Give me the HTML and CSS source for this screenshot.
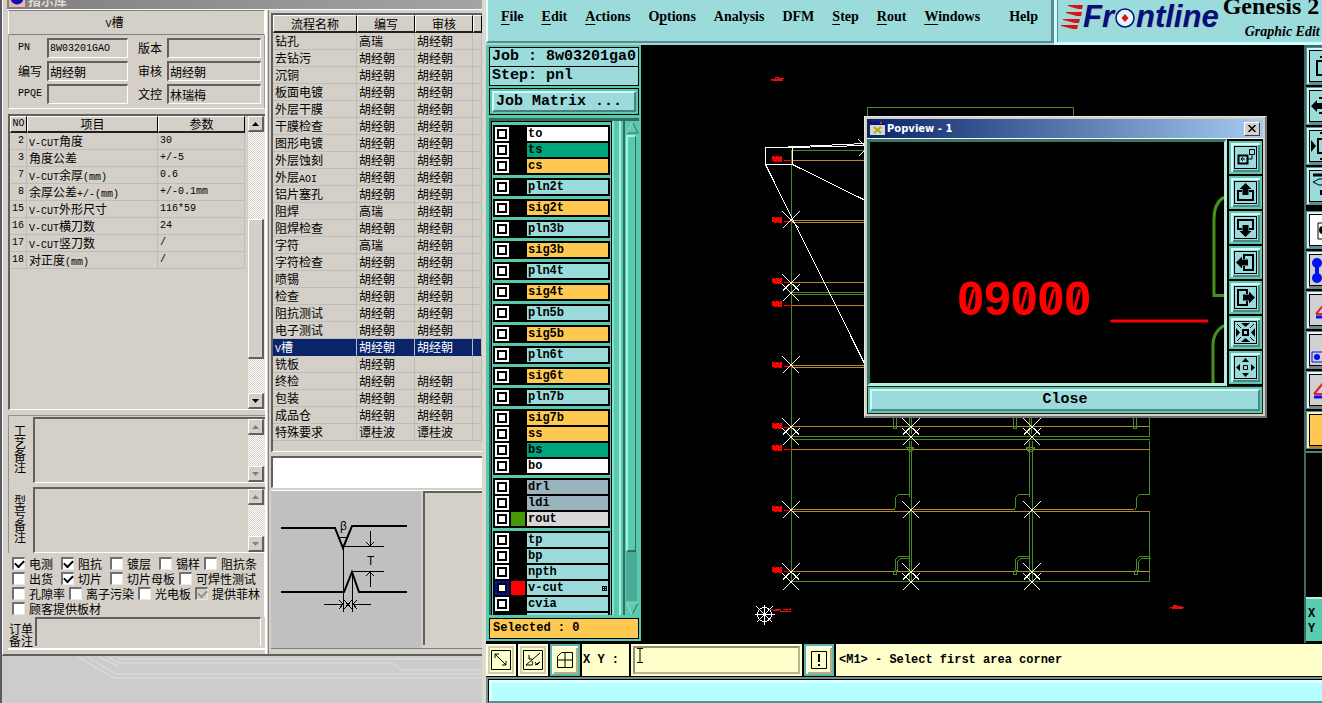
FILE: index.html
```html
<!DOCTYPE html>
<html lang="zh-CN">
<head>
<meta charset="utf-8">
<title>Genesis 2000 - Graphic Editor</title>
<link rel="stylesheet" href="styles.css">
</head>
<body>
<div class="desktop">

<section class="erp">
  <div class="erp-window">
    <header class="erp-title">
      <svg class="erp-icon" width="16" height="16" viewBox="0 0 16 16"><rect width="16" height="16" fill="#e8b8b0"/><circle cx="8" cy="7" r="6.5" fill="#1010b0"/><path d="M5 3h6l-3 6z" fill="#707820"/></svg>
      <span>指示库</span>
    </header>
    <div class="erp-body">
      <div class="col-a">
        <h1 class="process-name"><span class="lat">V</span>槽</h1>
        <div class="fields">
          <label for="pn" class="lat">PN</label><input id="pn" class="sunk lat" value="8W03201GAO">
          <label for="ver">版本</label><input id="ver" class="sunk">
          <label for="writer">编写</label><input id="writer" class="sunk" value="胡经朝">
          <label for="audit">审核</label><input id="audit" class="sunk" value="胡经朝">
          <label for="ppqe" class="lat">PPQE</label><input id="ppqe" class="sunk">
          <label for="doc">文控</label><input id="doc" class="sunk" value="林瑞梅">
        </div>
        <div class="params">
          <table class="grid">
            <thead><tr><th class="c-no lat">NO</th><th class="c-item">项目</th><th class="c-val">参数</th></tr></thead>
            <tbody>
              <tr><td class="num lat">2</td><td><span class="lat">V-CUT</span>角度</td><td class="lat">30</td></tr>
              <tr><td class="num lat">3</td><td>角度公差</td><td class="lat">+/-5</td></tr>
              <tr><td class="num lat">7</td><td><span class="lat">V-CUT</span>余厚<span class="lat">(mm)</span></td><td class="lat">0.6</td></tr>
              <tr><td class="num lat">8</td><td>余厚公差<span class="lat">+/-(mm)</span></td><td class="lat">+/-0.1mm</td></tr>
              <tr><td class="num lat">15</td><td><span class="lat">V-CUT</span>外形尺寸</td><td class="lat">116*59</td></tr>
              <tr><td class="num lat">16</td><td><span class="lat">V-CUT</span>横刀数</td><td class="lat">24</td></tr>
              <tr><td class="num lat">17</td><td><span class="lat">V-CUT</span>竖刀数</td><td class="lat">/</td></tr>
              <tr><td class="num lat">18</td><td>对正度<span class="lat">(mm)</span></td><td class="lat">/</td></tr>
            </tbody>
          </table>
          <div class="scroll">
            <button class="sbtn" aria-label="up"><svg width="7" height="4" viewBox="0 0 7 4"><path d="M0 4h7L3.500 0z"/></svg></button>
            <div class="track"><div class="thumb"></div></div>
            <button class="sbtn" aria-label="down"><svg width="7" height="4" viewBox="0 0 7 4"><path d="M0 0h7L3.500 4z"/></svg></button>
          </div>
        </div>
        <div class="memos">
          <div class="memo"><label for="m1">工艺备注</label>
            <div class="memo-box"><textarea id="m1"></textarea><div class="scroll off">
              <button class="sbtn" aria-label="up"><svg width="7" height="4" viewBox="0 0 7 4"><path d="M0 4h7L3.500 0z"/></svg></button><div class="track"></div>
              <button class="sbtn" aria-label="down"><svg width="7" height="4" viewBox="0 0 7 4"><path d="M0 0h7L3.500 4z"/></svg></button></div></div></div>
          <div class="memo"><label for="m2">型号备注</label>
            <div class="memo-box"><textarea id="m2"></textarea><div class="scroll off">
              <button class="sbtn" aria-label="up"><svg width="7" height="4" viewBox="0 0 7 4"><path d="M0 4h7L3.500 0z"/></svg></button><div class="track"></div>
              <button class="sbtn" aria-label="down"><svg width="7" height="4" viewBox="0 0 7 4"><path d="M0 0h7L3.500 4z"/></svg></button></div></div></div>
        </div>
        <div class="checks">
          <div class="check-row"><label><input type="checkbox" checked>电测</label><label><input type="checkbox" checked>阻抗</label><label><input type="checkbox">镀层</label><label><input type="checkbox">锡样</label><label class="tight"><input type="checkbox">阻抗条</label></div>
          <div class="check-row"><label><input type="checkbox">出货</label><label><input type="checkbox" checked>切片</label><label><input type="checkbox">切片母板</label><label class="tight"><input type="checkbox">可焊性测试</label></div>
          <div class="check-row close"><label><input type="checkbox">孔隙率</label><label><input type="checkbox">离子污染</label><label><input type="checkbox">光电板</label><label><input type="checkbox" checked disabled>提供菲林</label></div>
          <div class="check-row"><label><input type="checkbox">顾客提供板材</label></div>
        </div>
        <div class="order"><label for="ord">订单备注</label><textarea id="ord"></textarea></div>
      </div>

      <div class="col-b">
        <div class="process">
          <table class="grid">
            <thead><tr><th class="c-proc">流程名称</th><th class="c-who">编写</th><th class="c-who">审核</th><th></th></tr></thead>
            <tbody>
              <tr><td>钻孔</td><td>高瑞</td><td>胡经朝</td><td></td></tr>
              <tr><td>去钻污</td><td>胡经朝</td><td>胡经朝</td><td></td></tr>
              <tr><td>沉铜</td><td>胡经朝</td><td>胡经朝</td><td></td></tr>
              <tr><td>板面电镀</td><td>胡经朝</td><td>胡经朝</td><td></td></tr>
              <tr><td>外层干膜</td><td>胡经朝</td><td>胡经朝</td><td></td></tr>
              <tr><td>干膜检查</td><td>胡经朝</td><td>胡经朝</td><td></td></tr>
              <tr><td>图形电镀</td><td>胡经朝</td><td>胡经朝</td><td></td></tr>
              <tr><td>外层蚀刻</td><td>胡经朝</td><td>胡经朝</td><td></td></tr>
              <tr><td>外层<span class="lat">AOI</span></td><td>胡经朝</td><td>胡经朝</td><td></td></tr>
              <tr><td>铝片塞孔</td><td>胡经朝</td><td>胡经朝</td><td></td></tr>
              <tr><td>阻焊</td><td>高瑞</td><td>胡经朝</td><td></td></tr>
              <tr><td>阻焊检查</td><td>胡经朝</td><td>胡经朝</td><td></td></tr>
              <tr><td>字符</td><td>高瑞</td><td>胡经朝</td><td></td></tr>
              <tr><td>字符检查</td><td>胡经朝</td><td>胡经朝</td><td></td></tr>
              <tr><td>喷锡</td><td>胡经朝</td><td>胡经朝</td><td></td></tr>
              <tr><td>检查</td><td>胡经朝</td><td>胡经朝</td><td></td></tr>
              <tr><td>阻抗测试</td><td>胡经朝</td><td>胡经朝</td><td></td></tr>
              <tr><td>电子测试</td><td>胡经朝</td><td>胡经朝</td><td></td></tr>
              <tr class="sel"><td><span class="lat">V</span>槽</td><td>胡经朝</td><td>胡经朝</td><td></td></tr>
              <tr><td>铣板</td><td>胡经朝</td><td></td><td></td></tr>
              <tr><td>终检</td><td>胡经朝</td><td>胡经朝</td><td></td></tr>
              <tr><td>包装</td><td>胡经朝</td><td>胡经朝</td><td></td></tr>
              <tr><td>成品仓</td><td>胡经朝</td><td>胡经朝</td><td></td></tr>
              <tr><td>特殊要求</td><td>谭桂波</td><td>谭桂波</td><td></td></tr>
            </tbody>
          </table>
        </div>
        <textarea class="remark" aria-label="remark"></textarea>
        <div class="figure-row">
          <svg class="figure" viewBox="271 491 150 153" preserveAspectRatio="xMinYMin meet">
            <g fill="none" stroke="#000" stroke-width="2"><path d="M281 528h54l8 20 9-22h55M281 592h63l8-20 7 20h48"/></g>
            <g fill="none" stroke="#000" stroke-width="1" shape-rendering="crispEdges">
              <path d="M343.500 547v65M352.500 572v40M344 546.500h40M352 571.500h32M340 537.500h7M370.500 531v15M370.500 587v-15M324 604.500h19M353 604.500h18"/>
              <path d="M366 542l4 4 4-4M366 576l4-4 4 4M339 600l4 4-4 5M357 600l-4 4 4 5M344 600l8 9M352 600l-8 9"/>
            </g>
            <text x="340" y="530" class="fig-text">β</text><text x="367" y="565" class="fig-text">T</text>
          </svg>
          <div class="figure-side"></div>
        </div>
      </div>
    </div>
  </div>
  <svg class="backdrop" viewBox="0 0 483 47" preserveAspectRatio="xMinYMin slice"><g fill="none" stroke="#e2e2e2"><path d="M76 1l36 21M86 1l28 17M96 1l20 9M106 1l10 6M112 22h370M114 18h370M116 7h274l10 7h84M116 3h367"/></g></svg>
</section>

<section class="app">
  <header class="top">
    <nav class="menubar">
      <button><u>F</u>ile</button><button><u>E</u>dit</button><button><u>A</u>ctions</button><button>O<u>p</u>tions</button><button>Analysis</button><button>DFM</button><button><u>S</u>tep</button><button><u>R</u>out</button><button><u>W</u>indows</button><button class="help">Help</button>
    </nav>
    <div class="brand">
      <div class="logo">
        <svg width="22" height="24" viewBox="0 0 22 24"><g fill="#e01010"><path d="M7 0h15l-1 4h-4L7 1zM5 7h16l-1 4h-4L5 8zM2 14h17l-1 4h-4L2 15zM0 20h17l-1 4h-4L0 21z"/></g></svg><span>Fr</span><svg width="22" height="22" viewBox="0 0 22 22"><circle cx="11" cy="12" r="9" fill="#e0f6fa" stroke="#00107c" stroke-width="1.500"/><path d="M11 8l3.500 4-3.500 4-3.500-4z" fill="#e01010"/></svg><span>ntline</span>
      </div>
      <div class="product"><strong>Genesis 2</strong><em>Graphic Edit</em></div>
    </div>
  </header>

  <div class="middle">
    <aside class="side">
      <div class="info">Job : 8w03201ga0</div>
      <div class="info">Step: pnl</div>
      <div class="matrix"><button>Job Matrix ...</button></div>
      <div class="layers">
        <div class="layer-list">
          <div class="group">
            <label class="layer white"><input type="checkbox"><i></i><span>to</span></label>
            <label class="layer green"><input type="checkbox"><i></i><span>ts</span></label>
            <label class="layer amber"><input type="checkbox"><i></i><span>cs</span></label>
          </div>
          <div class="group"><label class="layer"><input type="checkbox"><i></i><span>pln2t</span></label></div>
          <div class="group"><label class="layer amber"><input type="checkbox"><i></i><span>sig2t</span></label></div>
          <div class="group"><label class="layer"><input type="checkbox"><i></i><span>pln3b</span></label></div>
          <div class="group"><label class="layer amber"><input type="checkbox"><i></i><span>sig3b</span></label></div>
          <div class="group"><label class="layer"><input type="checkbox"><i></i><span>pln4t</span></label></div>
          <div class="group"><label class="layer amber"><input type="checkbox"><i></i><span>sig4t</span></label></div>
          <div class="group"><label class="layer"><input type="checkbox"><i></i><span>pln5b</span></label></div>
          <div class="group"><label class="layer amber"><input type="checkbox"><i></i><span>sig5b</span></label></div>
          <div class="group"><label class="layer"><input type="checkbox"><i></i><span>pln6t</span></label></div>
          <div class="group"><label class="layer amber"><input type="checkbox"><i></i><span>sig6t</span></label></div>
          <div class="group"><label class="layer"><input type="checkbox"><i></i><span>pln7b</span></label></div>
          <div class="group">
            <label class="layer amber"><input type="checkbox"><i></i><span>sig7b</span></label>
            <label class="layer amber"><input type="checkbox"><i></i><span>ss</span></label>
            <label class="layer green"><input type="checkbox"><i></i><span>bs</span></label>
            <label class="layer white"><input type="checkbox"><i></i><span>bo</span></label>
          </div>
          <div class="group">
            <label class="layer slate"><input type="checkbox"><i></i><span>drl</span></label>
            <label class="layer slate"><input type="checkbox"><i></i><span>ldi</span></label>
            <label class="layer grey"><input type="checkbox"><i class="lime"></i><span>rout</span></label>
          </div>
          <div class="group">
            <label class="layer"><input type="checkbox"><i></i><span>tp</span></label>
            <label class="layer"><input type="checkbox"><i></i><span>bp</span></label>
            <label class="layer"><input type="checkbox"><i></i><span>npth</span></label>
            <label class="layer"><input type="checkbox" checked><i class="red"></i><span>v-cut<svg width="5" height="5" viewBox="0 0 5 5" shape-rendering="crispEdges"><path d="M.5.5h4v4h-4zM2.500 0v5M0 2.500h5" fill="none" stroke="#000"/></svg></span></label>
            <label class="layer"><input type="checkbox"><i></i><span>cvia</span></label>
            <div class="layer-cut"></div>
          </div>
        </div>
        <div class="vscroll">
          <svg width="13" height="14" viewBox="0 0 13 14"><path d="M1 12L6.500 1 12 12z" fill="#5ccbb0" stroke="#2f6f62"/><path d="M1 12L6.500 1" stroke="#b8f0e0"/></svg>
          <div class="vthumb"></div><div class="vtrack"></div>
          <svg width="13" height="14" viewBox="0 0 13 14"><path d="M1 2L6.500 13 12 2z" fill="#5ccbb0" stroke="#2f6f62"/><path d="M12 2H1l5 11" stroke="#b8f0e0" fill="none"/></svg>
        </div>
      </div>
      <div class="selected">Selected : 0</div>
    </aside>

    <main class="stage">
      <svg class="board" viewBox="641 45 664 598" preserveAspectRatio="xMinYMin slice">
        <defs>
          <g id="x"><path d="M-9-9l17 17M8-9l-17 17"/></g>
          <g id="xs"><path d="M-9 1l6 6M-3 1l-6 6M2 1l6 6M8 1l-6 6"/></g>
          <g id="xx"><use href="#x"/><use href="#xs"/><use href="#x" y="10"/></g>
          <g id="tag"><path d="M0-3h2l1 1 2-1 2 1 2-1v5H7L5 1 3 2H2V1H0zM11 1h8" /></g>
          <g id="notch"><path d="M14 0H4l-3 3v10l-2 3"/></g>
          <g id="notch2"><path d="M14 0H4l-3 3v10l-2 3v2h3v-3l1-2V5l3-3h9"/></g>
        </defs>
        <g fill="none" stroke-width="1" shape-rendering="crispEdges" transform="translate(.5 .5)">
          <g stroke="#b08c30"><path d="M791 160h74M791 220h74M791 222h74M791 282h74M791 305h74M791 365h74M791 367h74M791 426h358M791 449h358M791 509h102M912 509h101M1033 509h100M791 511h358M791 571h358"/></g>
          <g stroke="#4a8828">
            <path d="M867 116v-9h206v9M791 581V150h74M791 292h74M791 294h74M791 436h358M791 439h358M791 581h358"/>
            <path d="M909 417v16M911 417v16M909 440v56l-1 1M909 511v70M911 440v141M1029 417v16M1031 417v16M1029 440v56M1029 511v70M1032 440v141M1149 417v19M1149 440v54M1149 511v70"/>
            <path d="M893 417v11h3v-11M1013 417v11h3v-11M1133 417v11h3v-11M906 447h7l-2 4h-2zM1026 447h8l-2 4h-4z"/>
            <use href="#notch" x="894" y="494"/><use href="#notch" x="1014" y="494"/><use href="#notch" x="1135" y="494"/>
            <use href="#notch2" x="894" y="556"/><use href="#notch2" x="1014" y="556"/><use href="#notch2" x="1135" y="556"/>
          </g>
          <g stroke="#f00" fill="#f00">
            <use href="#tag" x="772" y="159"/><use href="#tag" x="772" y="220"/><use href="#tag" x="772" y="281"/><use href="#tag" x="772" y="304"/><use href="#tag" x="772" y="365"/><use href="#tag" x="772" y="426"/><use href="#tag" x="772" y="448"/><use href="#tag" x="772" y="509"/><use href="#tag" x="772" y="570"/>
          </g>
          <g stroke="#e01010"><path d="M769 81l2-2h4v-2h3v3h4v-3M771 80h7M773 79h9M776 78h7M1168 609l2-2h3v-2h3v3h6M1172 607h11M1171 608h8M1172 606h9M770 608l3 2h5M774 609h5M780 608v3h9M782 609h6M786 608v3h4M787 609h3v-2"/></g>
          <g stroke="#fff">
            <path d="M765 147h27v17h-27zM776 147l89-4M792 147l73-2M792 164l73 36M765 164l100 201"/>
            <use href="#x" x="867" y="148"/><use href="#x" x="791" y="220"/><use href="#xx" x="791" y="283"/><use href="#x" x="791" y="365"/>
            <use href="#xx" x="791" y="427"/><use href="#xx" x="911" y="427"/><use href="#xx" x="1032" y="427"/>
            <use href="#x" x="791" y="510"/><use href="#x" x="911" y="510"/><use href="#x" x="1032" y="510"/>
            <use href="#xx" x="791" y="572"/><use href="#xx" x="911" y="572"/><use href="#xx" x="1032" y="572"/>
            <circle cx="764" cy="614" r="7"/><path d="M754 614h20M764 604v20M756 606l16 16M772 606l-16 16"/>
          </g>
        </g>
      </svg>

      <section class="popup">
        <header class="popup-title">
          <svg width="15" height="13" viewBox="0 0 15 13"><rect width="15" height="13" fill="#d8d8d0"/><rect width="15" height="3" fill="#101080"/><rect x="10" width="2" height="2" fill="#a04040"/><path d="M4 5l7 6M11 5l-7 6" stroke="#b0a810" stroke-width="2"/></svg>
          <span>Popview - 1</span>
          <button aria-label="close window"><svg width="8" height="7" viewBox="0 0 8 7"><path d="M.5 0l7 7M7.500 0l-7 7" stroke="#000" stroke-width="1.500"/></svg></button>
        </header>
        <div class="popup-body">
          <svg class="popup-view" viewBox="871 141 353 241" preserveAspectRatio="xMinYMin slice">
            <text x="958" y="314" class="cad-text">09000</text>
            <g stroke="#f00" stroke-width="3" fill="none" stroke-linecap="round"><path d="M1112 319.500h95M969 307l5-18M1022 307l5-18M1049 307l5-18M1075 307l5-18"/></g>
            <path d="M1224 196c-7 4-10 12-10 22v76h10M1224 324c-7 4-11 10-11 20v40" fill="none" stroke="#48901c" stroke-width="3"/>
          </svg>
          <div class="popup-tools">
            <button aria-label="pick"><svg viewBox="0 0 21 21"><path d="M3.500 8.500h9v8h-9z" stroke-width="2"/><path d="M14.500 2.500h5v5h-5zM13 12h4V8M10 12H6M8 10l-2 2 2 2"/></svg></button>
            <button aria-label="pan up"><svg viewBox="0 0 21 21"><path d="M7 9H3v9h15V9h-4" stroke-width="2"/><path class="f" d="M10.500 1l6 6h-3v6h-6V7h-3z"/></svg></button>
            <button aria-label="pan down"><svg viewBox="0 0 21 21"><path d="M7 12H3V3h15v9h-4" stroke-width="2"/><path class="f" d="M10.500 20l6-6h-3V8h-6v6h-3z"/></svg></button>
            <button aria-label="pan left"><svg viewBox="0 0 21 21"><path d="M9 7V3h9v15H9v-4" stroke-width="2"/><path class="f" d="M1 10.500l6-6v3h6v6H7v3z"/></svg></button>
            <button aria-label="pan right"><svg viewBox="0 0 21 21"><path d="M12 7V3H3v15h9v-4" stroke-width="2"/><path class="f" d="M20 10.500l-6-6v3H8v6h6v3z"/></svg></button>
            <button aria-label="zoom in"><svg viewBox="0 0 21 21"><path d="M8 8h5v5H8z" stroke-width="2"/><path class="f" d="M6 1h9l-4.500 4zM6 20h9l-4.500-4zM1 6v9l4-4.500zM20 6v9l-4-4.500z"/><path d="M2 2l4 4M19 2l-4 4M2 19l4-4M19 19l-4-4"/></svg></button>
            <button aria-label="zoom out"><svg viewBox="0 0 21 21"><path d="M8.500 8.500h4v4h-4z"/><path class="f" d="M7 5h7l-3.500-4zM7 16h7l-3.500 4zM5 7v7l-4-3.500zM16 7v7l4-3.500z"/></svg></button>
          </div>
        </div>
        <div class="popup-foot"><button>Close</button></div>
      </section>
    </main>

    <aside class="tools">
      <button class="t"><svg viewBox="0 0 30 30"><path d="M7 10h16v14H7zM10 6h10" stroke-width="2"/></svg></button>
      <button class="t"><svg viewBox="0 0 30 30"><path d="M9 7h16v15H9" stroke-width="2"/><path class="f" d="M1 15l6-6v3h5v6H7v3z"/></svg></button>
      <button class="t"><svg viewBox="0 0 30 30"><path d="M8 8h14v14H8zM10 2h12M10 28h12" stroke-width="2"/><path class="f" d="M1 9l5 6-5 6z"/></svg></button>
      <button class="t gap"><svg viewBox="0 0 30 30"><path d="M3 4h20" stroke-width="3"/><path d="M3 11l6-3h14M3 11l6 3h14"/><path class="f" d="M10 19h8v5h-8z"/></svg></button>
      <button class="t w"><svg viewBox="0 0 30 30"><path d="M8 8h16v16H8z"/><circle class="f" cx="13" cy="15" r="4"/></svg></button>
      <button class="t g"><svg viewBox="0 0 30 30"><g fill="#0010f0" stroke="none"><circle cx="7" cy="8" r="5"/><circle cx="7" cy="23" r="5"/><path d="M5 8h4v15H5z"/></g></svg></button>
      <button class="t g"><svg viewBox="0 0 30 30"><path d="M6 19l10-12M6 19h8" stroke="#e02030" stroke-width="2"/><path d="M6 22h9" stroke="#0010f0" stroke-width="3"/></svg></button>
      <button class="t g"><svg viewBox="0 0 30 30"><path d="M2 17h22v10H2z" stroke="#0010f0"/><circle cx="7" cy="22" r="3" fill="#0010f0" stroke="none"/></svg></button>
      <button class="t g"><svg viewBox="0 0 30 30"><path d="M4 19l10-12M4 19h8" stroke="#e02030" stroke-width="2"/><path d="M4 22h9" stroke="#0010f0" stroke-width="3"/></svg></button>
      <button class="t a"><svg viewBox="0 0 30 30"></svg></button>
      <div class="rest"></div>
      <div class="xy">X<br>Y</div>
    </aside>
  </div>

  <footer class="status">
    <button class="sb" aria-label="measure"><svg viewBox="0 0 20 20"><path d="M.5.5h19v19H.5zM4 4l11 11M4 8V4h4M15 11v4h-4"/></svg></button>
    <button class="sb" aria-label="angle"><svg viewBox="0 0 20 20"><path d="M.5.5h19v19H.5zM3 15L17 3M3 15h6c1 0 1-2 0-4M6 5v4h3M12 12l2 3 3-3M12 15l5-3"/></svg></button>
    <button class="sb on" aria-label="grid"><svg viewBox="0 0 20 20"><path d="M2.500 17.500v-11l4-4h11v15zM2.500 10h15M10 2.500v15"/></svg></button>
    <label class="xylabel" for="cmd">X Y :</label>
    <div class="cmdwrap"><input id="cmd"><svg class="caret" width="6" height="15" viewBox="0 0 6 15"><path d="M0 .5h6M0 14.500h6M3 0v15" stroke="#000"/></svg></div>
    <button class="sb on" aria-label="alert"><svg viewBox="0 0 20 20"><path d="M2.500 1.500h15v17h-15z"/><path d="M10 4v8M10 14v2" stroke-width="2"/></svg></button>
    <p class="message">&lt;M1&gt; - Select first area corner</p>
  </footer>
  <div class="under"><div></div></div>
</section>
</div>
</body>
</html>
```

FILE: styles.css
```css
* { box-sizing: border-box; }
body { margin: 0; overflow: hidden; background: #000; }
button, input, textarea { font: inherit; color: inherit; border-radius: 0; margin: 0; }
button { cursor: default; }
textarea { resize: none; display: block; }
.desktop { display: grid; grid-template-columns: 486px minmax(0, 1fr); height: 100vh; overflow: hidden; }

/* left window */
.erp { display: flex; flex-direction: column; min-height: 0; background: #ccc; border-left: 2px solid #5a5a66; border-right: 4px solid #dcdad0; font: 12px/16px "Noto Sans CJK SC", sans-serif; color: #000; overflow: hidden; }
.erp-window { display: flex; flex-direction: column; flex: 1; min-height: 0; background: #d4d0c8; border-left: 1px solid #fff; border-bottom: 2px solid #606060; padding-left: 4px; }
.lat { font-family: "Liberation Mono", monospace; font-size: 10px; }
span.lat { line-height: 1; }
.erp-title { display: flex; align-items: flex-end; gap: 3px; height: 9px; padding-bottom: 2px; background: linear-gradient(90deg, #808080, #a4a4a4); color: #dcd8d0; font: bold 13px/14px "Noto Sans CJK SC", sans-serif; overflow: hidden; }
.erp-title span { flex: none; }
.erp-icon { flex: none; margin-left: 2px; }
.erp-body { display: flex; flex: 1; min-height: 0; border-top: 1px solid #fff; }
.col-a { display: flex; flex-direction: column; width: 260px; padding-left: 1px; border-right: 2px solid #fff; }
.process-name { height: 25px; margin: 0; padding-right: 44px; border: 1px solid #808080; border-left-color: #fff; border-right-color: #fff; font-size: 12px; font-weight: 400; line-height: 22px; text-align: center; }
.fields { display: grid; grid-template-columns: 26px 81px 33px 1fr; column-gap: 3px; row-gap: 3px; padding: 3px 3px 4px 9px; border: 1px solid #a0a0a0; border-bottom-color: #fff; border-top: 0; align-items: center; }
.fields label:nth-of-type(even) { padding-left: 7px; white-space: nowrap; width: 40px; }
.sunk { width: 100%; min-width: 0; height: 20px; padding: 0 1px; background: transparent; border: 2px solid #fff; border-top-color: #606060; border-left-color: #606060; border-right-width: 1px; border-bottom-width: 1px; outline: 0; }
.params { display: flex; justify-content: space-between; height: 296px; margin: 5px 0 5px; border: 2px solid #fff; border-top-color: #606060; border-left-color: #606060; border-right: 0; border-bottom-width: 1px; }
.grid { border-collapse: separate; border-spacing: 0; table-layout: fixed; align-self: flex-start; }
.grid th { height: 17px; padding: 0; font-weight: 400; text-align: center; line-height: 14px; border: 1px solid #fff; border-right-color: #000; border-bottom: 2px solid #202020; }
.grid td { height: 17px; padding: 0 2px; line-height: 16px; vertical-align: middle; border-right: 1px solid #bcbcbc; border-bottom: 1px solid #bcbcbc; white-space: nowrap; overflow: hidden; }
.params .grid { width: 235px; }
.c-no { width: 17px; }
.c-item { width: 131px; }
.grid .num { text-align: right; padding: 0 2px 0 0; }
.scroll { display: flex; flex-direction: column; width: 17px; }
.sbtn { display: grid; place-items: center; width: 16px; height: 16px; padding: 0; background: #d4d0c8; border: 1px solid #fff; border-right: 2px solid #606060; border-bottom: 2px solid #606060; flex: none; }
.track { display: flex; flex-direction: column; justify-content: flex-end; flex: 1; background: repeating-conic-gradient(#fff 0 25%, #d4d0c8 0 50%) 0 0 / 2px 2px; padding-bottom: 34px; }
.thumb { height: 140px; width: 16px; background: #d4d0c8; border: 1px solid #fff; border-right: 2px solid #606060; border-bottom: 2px solid #606060; }
.off .sbtn svg { fill: #808080; }
.off .track { padding: 0; }
.memos { display: flex; flex-direction: column; gap: 4px; border-top: 1px solid #909090; border-left: 1px solid #909090; padding: 1px 0 0; }
.memo { display: flex; height: 66px; }
.memo label { width: 24px; padding: 8px 7px 0 5px; line-height: 12px; overflow-wrap: anywhere; }
.memo-box { display: flex; flex: 1; border: 2px solid #fff; border-top-color: #606060; border-left-color: #606060; border-right: 0; border-bottom-width: 1px; }
.memo-box textarea { flex: 1; min-width: 0; height: auto; border: 0; background: transparent; outline: 0; }
.checks { display: flex; flex-direction: column; padding: 3px 0 1px 4px; border-right: 1px solid #fff; }
.check-row { display: flex; gap: 8px; height: 15px; white-space: nowrap; }
.check-row.close { gap: 4px; }
.check-row label { display: flex; align-items: center; gap: 4px; line-height: 15px; flex: none; }
.check-row .tight { margin-left: -4px; }
.checks input { appearance: none; width: 13px; height: 13px; background: #fff; border: 1px solid #e8e8e4; border-top: 2px solid #707070; border-left: 2px solid #707070; }
.checks input:checked::after { content: ""; display: block; width: 7px; height: 4px; margin: 1px; border-left: 2px solid #000; border-bottom: 2px solid #000; transform: rotate(-45deg); }
.checks input:disabled { background: #d4d0c8; }
.checks input:disabled::after { border-color: #909090; }
.order { display: flex; height: 33px; border-bottom: 2px solid #fff; }
.order label { width: 27px; padding: 6px 0 0 1px; line-height: 12px; }
.order textarea { flex: 1; min-width: 0; height: 29px; margin-right: 4px; background: transparent; border: 0; border-top: 2px solid #606060; border-left: 2px solid #606060; border-right: 1px solid #fff; outline: 0; }
.col-b { display: flex; flex-direction: column; flex: 1; min-width: 0; padding: 3px 0 5px 2px; border-left: 1px solid #808080; margin-left: 1px; overflow: hidden; }
.process { height: 439px; border: 2px solid #606060; border-right: 0; border-bottom: 1px solid #fff; }
.process .grid { width: 100%; }
.process .grid th { height: 18px; }
.c-proc { width: 84px; }
.c-who { width: 58px; }
.sel td { background: #0a246a; color: #fff; border-bottom-color: #0a246a; }
.remark { flex: none; height: 32px; width: 100%; margin: 4px 0 2px; background: #fff; border: 2px solid #606060; border-right: 0; border-bottom: 1px solid #fff; outline: 0; }
.figure-row { display: flex; flex: 1; min-height: 0; gap: 2px; border-top: 1px solid #fff; border-bottom: 1px solid #808080; }
.figure { flex: none; width: 150px; height: 100%; background: #c0c0c0; }
.fig-text { font: 12px "Liberation Sans", sans-serif; }
.figure-side { flex: 1; margin-bottom: 3px; border-left: 2px solid #606060; border-top: 2px solid #606060; }
.backdrop { flex: none; width: 100%; height: 47px; background: #ccc; }

/* right application */
.app { display: flex; flex-direction: column; min-width: 0; min-height: 0; font: bold 12px/16px "Liberation Mono", monospace; color: #000; }
.top { display: flex; flex: none; height: 45px; background: #9cdbdb; overflow: hidden; }
.menubar { display: flex; align-items: flex-start; gap: 18px; width: 568px; flex: none; padding: 8px 13px 0 13px; border-left: 2px solid #dff; border-right: 3px solid #5c8a90; border-bottom: 2px solid #5c8a90; margin-bottom: 2px; font: bold 14px/18px "Liberation Serif", serif; }
.menubar button { padding: 0; border: 0; background: none; line-height: 18px; }
.menubar u { text-underline-offset: 3px; }
.menubar .help { margin-left: auto; }
.brand { display: flex; flex: 1; min-width: 0; gap: 4px; padding-left: 4px; border-left: 3px solid #cff; border-bottom: 3px solid #cff; box-shadow: inset 1px 0 #5c8a90; overflow: hidden; }
.logo { display: flex; align-items: center; height: 34px; flex: none; color: #00107c; font: italic bold 31px/34px "Liberation Sans", sans-serif; text-shadow: 1px 1px #b8b8b0; }
.product { display: flex; flex-direction: column; flex: none; white-space: nowrap; font-family: "Liberation Serif", serif; overflow: hidden; }
.product strong { font-size: 24px; line-height: 28px; margin-top: -8px; }
.product em { font-size: 14px; line-height: 18px; padding: 3px 0 0 22px; }
.middle { display: flex; flex: 1; min-height: 0; }
.side { display: flex; flex-direction: column; width: 155px; flex: none; padding: 2px 2px 2px 3px; background: #5ac8ac; border-bottom: 2px solid #000; }
.info { height: 20px; margin-bottom: -1px; padding: 0 2px; border: 1px solid #000; background: #9cdbdb; font-size: 15px; line-height: 18px; white-space: nowrap; overflow: hidden; }
.matrix { margin: 3px 0 3px; padding: 2px; border: 1px solid #000; height: 27px; }
.matrix button { display: block; width: 100%; height: 21px; padding: 0 2px; background: #9cdbdb; border: 2px solid #cffafa; border-right-color: #4c8080; border-bottom-color: #4c8080; font-size: 15px; line-height: 17px; text-align: left; }
.layers { display: flex; flex: 1; min-height: 0; justify-content: space-between; padding-right: 1px; border-left: 2px solid #2f6f62; border-top: 3px solid #2f6f62; }
.layer-list { display: flex; flex-direction: column; gap: 3px; width: 121px; padding: 3px 0 0 1px; border-left: 1px solid #000; border-top: 1px solid #000; border-right: 1px solid #000; overflow: hidden; box-shadow: 2px 0 #8ee0cc, 7px 0 #5ac8ac, 9px 0 #a8f0e0; }
.group { flex: none; width: 117px; padding: 1px; background: #000; }
.layer { display: grid; grid-template-columns: 14px 14px 1fr; gap: 2px; height: 16px; padding: 1px; }
.layer input { appearance: none; width: 14px; height: 14px; background: #fff; border: 2px solid #fff; box-shadow: inset 0 0 0 2px #000; }
.layer input:checked { border-color: #0010a0; }
.layer span { display: flex; justify-content: space-between; align-items: center; height: 14px; padding: 0 1px; background: #9cdbdb; line-height: 14px; }
.layer.white span { background: #fff; }
.layer.green span { background: #00a47c; }
.layer.amber span { background: #ffc850; }
.layer.slate span { background: #9ab4be; }
.layer.grey span { background: #d8d8d8; }
.lime { background: #449804; }
.red { background: #f00; }
.layer-cut { height: 4px; margin: 1px 1px 0 33px; background: #9cdbdb; }
.vscroll { display: flex; flex-direction: column; width: 15px; padding: 0 1px; border-left: 2px solid #2f6f62; }
.vthumb { flex: 420; margin-right: 1px; background: #54ccb0; border-left: 2px solid #a8f0e0; border-top: 2px solid #a8f0e0; border-right: 1px solid #2f6f62; border-bottom: 2px solid #2f6f62; }
.vtrack { flex: 50; background: #48ac98; }
.selected { height: 21px; margin-top: 3px; padding: 0 3px; border: 1px solid #000; background: #ffc850; line-height: 18px; }
.stage { position: relative; flex: 1; min-width: 0; background: #000; overflow: hidden; }
.board { display: block; width: 100%; height: 100%; }
.popup { position: absolute; left: 223px; top: 71px; width: 403px; height: 302px; display: flex; flex-direction: column; padding: 2px; background: #d4d0c8; border: 1px solid #e8e8e0; border-right: 2px solid #707070; border-bottom: 2px solid #707070; }
.popup-title { display: flex; align-items: center; gap: 2px; flex: none; height: 19px; padding: 0 3px; background: linear-gradient(90deg, #0a246a, #a6caf0); color: #fff; font: bold 10px/18px "DejaVu Sans", sans-serif; }
.popup-title button { display: grid; place-items: center; margin-left: auto; width: 16px; height: 14px; padding: 0; background: #d4d0c8; border: 1px solid #fff; border-right-color: #404040; border-bottom-color: #404040; }
.popup-body { display: flex; flex: 1; min-height: 0; background: #000; border-top: 1px solid #fff; }
.popup-view { display: block; flex: 1; min-width: 0; height: 100%; border: 3px solid #b8ecdc; border-top-color: #347868; border-left-color: #347868; }
.cad-text { font: bold 48px "Liberation Sans", sans-serif; fill: #f00; }
.popup-tools { display: flex; flex-direction: column; gap: 2px; width: 36px; padding: 2px 1px 2px 2px; }
.popup-tools button { flex: 1; min-height: 0; padding: 2px; background: #9cdbdb; border: 2px solid #64c4ac; box-shadow: inset 2px 2px #cffafa, inset -2px -2px #4c8888; display: grid; place-items: center; }
.popup-tools svg { width: 21px; height: 21px; outline: 1px solid #000; }
.popup-tools svg, .t svg, .sb svg { fill: none; stroke: #000; }
.popup-tools .f, .t .f { fill: #000; stroke: none; }
.popup-foot { flex: none; height: 28px; padding: 2px; background: #64c4ac; border: 1px solid #102820; }
.popup-foot button { display: block; width: 100%; height: 22px; padding: 0; background: #9cdbdb; border: 2px solid #cffafa; border-right-color: #4c8888; border-bottom-color: #4c8888; font-size: 15px; line-height: 18px; }
.tools { display: flex; flex-direction: column; width: 18px; flex: none; border-left: 2px solid #386c64; border-top: 2px solid #386c64; background: #000; overflow: hidden; }
.t { display: block; width: 42px; height: 38px; margin-bottom: 2px; padding: 2px 3px; flex: none; background: #9cdbdb; border: 1px solid #5c8a90; box-shadow: inset 2px 2px #cffafa, inset 0 -3px #5c9090; }
.t svg { display: block; width: 30px; height: 30px; outline: 1px solid #000; }
.t.gap { margin-bottom: 6px; }
.t.w { background: #fff; }
.t.g { background: #d0d0d0; box-shadow: inset 2px 2px #f4f4f4, inset 0 -3px #808080; }
.t.a { background: #ffc850; box-shadow: inset 2px 2px #fff0c0, inset 0 -3px #b08030; }
.rest { flex: 1; border-top: 2px solid #607878; }
.xy { height: 46px; padding: 8px 0 0 2px; background: #5accb0; border-top: 2px solid #b8f0e0; border-bottom: 2px solid #000; line-height: 15px; }
.status { display: flex; flex: none; height: 34px; padding: 1px 0; gap: 2px; background: #000; }
.sb { width: 30px; flex: none; display: grid; place-items: center; padding: 0; background: #ffffcc; border: 2px solid #ffffe4; box-shadow: inset 0 0 0 2px #d0d0a8; }
.sb.on { border: 2px solid #5cb8a4; box-shadow: inset 2px 2px #fffff0, inset -2px -2px #b0b088; }
.sb svg { width: 20px; height: 20px; }
.xylabel { width: 47px; flex: none; background: #ffffcc; line-height: 32px; padding-left: 1px; white-space: nowrap; overflow: hidden; }
.cmdwrap { position: relative; width: 171px; flex: none; padding: 2px; background: #ffffcc; }
.cmdwrap input { display: block; width: 100%; height: 28px; background: #ffffcc; border: 2px solid #909078; border-right-color: #b8b890; border-bottom-color: #b8b890; outline: 0; }
.caret { position: absolute; left: 6px; top: 4px; }
.message { flex: 1; min-width: 0; margin: 0; padding-left: 3px; background: #ffffcc; line-height: 32px; white-space: nowrap; }
.under { flex: none; height: 26px; padding: 2px 0 0 2px; background: #709090; }
.under div { height: 24px; background: #b4ffff; border-top: 1px solid #000; border-left: 1px solid #000; border-bottom: 2px solid #5c9090; box-shadow: inset 3px 3px #dcffff; }
```
